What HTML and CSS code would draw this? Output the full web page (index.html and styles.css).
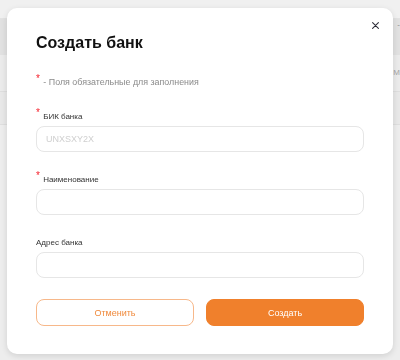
FILE: index.html
```html
<!DOCTYPE html>
<html lang="ru">
<head>
<meta charset="utf-8">
<title>Создать банк</title>
<link rel="stylesheet" href="styles.css">
</head>
<body>
<div class="page">
  <div class="topbar"></div>
  <div class="thead"><span class="thead-mark">-</span></div>
  <div class="trow"><span class="cell-m">M</span></div>
  <div class="trow trow-2"></div>
  <div class="rest"></div>
</div>

<div class="modal">
  <button class="close" aria-label="Закрыть">
    <svg width="7" height="7" viewBox="0 0 7 7"><path d="M0.6 0.6L6.4 6.4M6.4 0.6L0.6 6.4" stroke="#2f2f3a" stroke-width="1.1" fill="none" stroke-linecap="round"/></svg>
  </button>
  <h1 class="title">Создать банк</h1>
  <div class="note"><span class="star">*</span> - Поля обязательные для заполнения</div>

  <div class="field">
    <label class="label"><span class="star">*</span> БИК банка</label>
    <input class="input" placeholder="UNXSXY2X">
  </div>
  <div class="field">
    <label class="label"><span class="star">*</span> Наименование</label>
    <input class="input">
  </div>
  <div class="field">
    <label class="label">Адрес банка</label>
    <input class="input">
  </div>

  <div class="actions">
    <button class="btn btn-cancel">Отменить</button>
    <button class="btn btn-primary">Создать</button>
  </div>
</div>
</body>
</html>
```
FILE: styles.css
```css
* { box-sizing: border-box; }
html, body { margin: 0; padding: 0; }
body {
  width: 400px;
  height: 360px;
  overflow: hidden;
  background: #ececec;
  font-family: "Liberation Sans", Arial, sans-serif;
}
.page { width: 400px; }
.topbar { height: 19px; background: #f0f0f0; border-bottom: 1px solid #e2e2e2; }
.thead { height: 36px; background: #e1e1e1; position: relative; }
.thead-mark { position: absolute; right: 0; top: 1px; font-size: 8px; color: #8a8a8a; }
.trow { height: 37px; border-bottom: 1px solid #dedede; background: #ebebeb; position: relative; }
.trow-2 { height: 33px; background: #e8e8e8; }
.rest { height: 240px; background: #ededed; }
.cell-m { position: absolute; right: 0; top: 13px; font-size: 8px; color: #a5a5a5; }

.modal {
  position: fixed;
  left: 7px;
  top: 8px;
  width: 386px;
  height: 346px;
  background: #fff;
  border-radius: 10px;
  box-shadow: 0 2px 6px rgba(0,0,0,0.12);
  padding: 25px 29px 0 29px;
}
.close {
  position: absolute;
  right: 14px;
  top: 14px;
  width: 7px;
  height: 7px;
  padding: 0;
  border: 0;
  background: none;
  display: flex;
}
.title {
  margin: 0;
  font-size: 16px;
  line-height: 20px;
  font-weight: 700;
  color: #111;
}
.note {
  margin-top: 22px;
  font-size: 8.9px;
  line-height: 14px;
  color: #8a8a8a;
}
.star {
  color: #f5222d;
  font-size: 10px;
  line-height: 0;
  margin-right: 1px;
  position: relative;
  top: -3px;
}
.field {
  margin-top: 22px;
  display: flex;
  flex-direction: column;
  gap: 3px;
}
.label {
  display: block;
  height: 12px;
  font-size: 8px;
  line-height: 12px;
  color: #333;
}
.input {
  display: block;
  height: 26px;
  width: 100%;
  border: 1px solid #e6e6e6;
  border-radius: 8px;
  padding: 0 9px;
  font-family: inherit;
  font-size: 9px;
  color: #333;
  outline: none;
}
.input::placeholder { color: #cfcfcf; }
.actions {
  margin-top: 21px;
  display: flex;
  gap: 12px;
}
.btn {
  flex: 1;
  height: 27px;
  border-radius: 8px;
  font-family: inherit;
  font-size: 9px;
  padding: 0;
}
.btn-cancel {
  background: #fff;
  border: 1px solid #f7b88a;
  color: #f08a3c;
}
.btn-primary {
  background: #f0802c;
  border: 1px solid #f0802c;
  color: #fff;
}
```
